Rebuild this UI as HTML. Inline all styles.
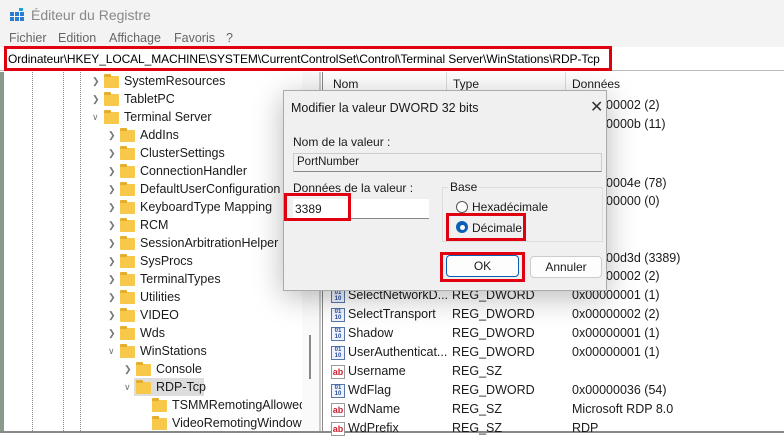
<!DOCTYPE html><html><head><meta charset="utf-8"><style>
*{margin:0;padding:0;box-sizing:border-box}
body{width:784px;height:433px;overflow:hidden;background:#fff;font-family:"Liberation Sans",sans-serif;font-size:12px;color:#1a1a1a;position:relative}
.a{position:absolute;white-space:nowrap}
.fold{position:absolute;width:15px;height:12px;background:#f7c84a;border-radius:1px}
.fold:before{content:"";position:absolute;left:0;top:-2px;width:7px;height:3px;background:#e6ad2a;border-radius:1px 1px 0 0}
.chev{position:absolute;font-size:9px;color:#777}
.ic{position:absolute;width:14px;height:14px;border:1px solid #5577aa;font-size:6px;line-height:6px;color:#2a4d9a;font-weight:bold;text-align:center;background:#eef3ff}
.ab{position:absolute;width:14px;height:14px;border:1px solid #999;font-size:9px;line-height:12px;color:#c23;font-weight:bold;text-align:center;background:#fff}
.rb{position:absolute;border:3px solid #e0000f}
#tree{position:absolute;left:0;top:72px;width:302px;height:359px;overflow:hidden}
</style></head><body>
<div class="a" style="left:0;top:0;width:784px;height:30px;background:#f3f3f3"></div>
<svg class="a" style="left:10px;top:8px" width="14" height="14"><g fill="#2b7cd3"><rect x="0" y="4" width="4" height="4"/><rect x="5" y="4" width="4" height="4"/><rect x="0" y="9" width="4" height="4"/><rect x="5" y="9" width="4" height="4"/><rect x="10" y="9" width="4" height="4"/><rect x="10" y="4" width="4" height="4"/><rect x="9" y="0" width="4" height="3" fill="#1ea0d8"/></g></svg>
<div class="a" style="left:31px;top:7px;font-size:14px;color:#888">Éditeur du Registre</div>
<div class="a" style="left:0;top:30px;width:784px;height:17px;background:#f3f3f3"></div>
<div class="a" style="left:9px;top:31px;color:#666;font-size:12.5px">Fichier</div>
<div class="a" style="left:58px;top:31px;color:#666;font-size:12.5px">Edition</div>
<div class="a" style="left:109px;top:31px;color:#666;font-size:12.5px">Affichage</div>
<div class="a" style="left:174px;top:31px;color:#666;font-size:12.5px">Favoris</div>
<div class="a" style="left:226px;top:31px;color:#666;font-size:12.5px">?</div>
<div class="a" style="left:0;top:47px;width:784px;height:24px;background:#fff;border-bottom:1px solid #bbb"></div>
<div class="rb" style="left:4px;top:46px;width:608px;height:25px"></div>
<div class="a" style="left:8px;top:52px;font-size:12px;letter-spacing:-0.1px;color:#000">Ordinateur\HKEY_LOCAL_MACHINE\SYSTEM\CurrentControlSet\Control\Terminal Server\WinStations\RDP-Tcp</div>
<div class="a" style="left:0;top:72px;width:4px;height:361px;background:#8a9a8a"></div>
<div class="a" style="left:32px;top:72px;height:361px;border-left:1px dotted #888"></div>
<div class="a" style="left:63px;top:72px;height:361px;border-left:1px dotted #888"></div>
<div class="a" style="left:80px;top:72px;height:361px;border-left:1px dotted #888"></div>
<div id="tree"></div>
<div class="a" style="left:302px;top:72px;width:17px;height:359px;background:#fafafa"></div>
<div class="a" style="left:309px;top:335px;width:2px;height:44px;background:#888"></div>
<div class="a" style="left:319px;top:72px;width:2px;height:361px;background:#ccc"></div>
<div class="a" style="left:322px;top:72px;width:1px;height:361px;background:#888"></div>
<div class="a" style="left:0;top:431px;width:784px;height:2px;background:#888"></div>
<div class="a" style="left:333px;top:77px;font-size:12px">Nom</div>
<div class="a" style="left:446px;top:72px;height:20px;border-left:1px solid #ddd"></div>
<div class="a" style="left:565px;top:72px;height:20px;border-left:1px solid #ddd"></div>
<div class="a" style="left:453px;top:77px">Type</div>
<div class="a" style="left:572px;top:77px">Données</div>
<div id="rows"></div>
<div class="a" style="left:283px;top:90px;width:324px;height:201px;background:#f0f0f0;border:1px solid #aaa;box-shadow:0 6px 28px rgba(0,0,0,.28)"></div>
<div class="a" style="left:291px;top:101px;font-size:12.5px">Modifier la valeur DWORD 32 bits</div>
<div class="a" style="left:590px;top:97px;font-size:16px;color:#333">✕</div>
<div class="a" style="left:293px;top:135px">Nom de la valeur :</div>
<div class="a" style="left:293px;top:153px;width:309px;height:19px;background:#f0f0f0;border:1px solid #ccc;border-bottom-color:#888;padding:2px 3px;font-size:11.5px">PortNumber</div>
<div class="a" style="left:293px;top:181px">Données de la valeur :</div>
<div class="a" style="left:293px;top:199px;width:136px;height:20px;background:#fff;border-bottom:1px solid #888"></div>
<div class="a" style="left:295px;top:202px;font-size:12px">3389</div>
<div class="rb" style="left:284px;top:193px;width:67px;height:28px"></div>
<div class="a" style="left:442px;top:187px;width:161px;height:55px;border:1px solid #ddd"></div>
<div class="a" style="left:448px;top:180px;background:#f0f0f0;padding:0 2px">Base</div>
<div class="a" style="left:456px;top:201px;width:12px;height:12px;border:1px solid #555;border-radius:50%;background:#fff"></div>
<div class="a" style="left:472px;top:200px">Hexadécimale</div>
<div class="a" style="left:456px;top:221px;width:12px;height:12px;border-radius:50%;background:#0a5fb4"></div>
<div class="a" style="left:459.5px;top:224.5px;width:5px;height:5px;border-radius:50%;background:#fff"></div>
<div class="a" style="left:472px;top:221px">Décimale</div>
<div class="rb" style="left:446px;top:213px;width:80px;height:28px"></div>
<div class="a" style="left:446px;top:255px;width:73px;height:22px;background:#fdfdfd;border:1px solid #0a5fb4;border-radius:4px;text-align:center;line-height:20px">OK</div>
<div class="rb" style="left:440px;top:252px;width:85px;height:30px"></div>
<div class="a" style="left:530px;top:256px;width:72px;height:22px;background:#fdfdfd;border:1px solid #ccc;border-radius:4px;text-align:center;line-height:20px">Annuler</div>
<script>
var t=[[1,"SystemResources",">"],[1,"TabletPC",">"],[1,"Terminal Server","v"],[2,"AddIns",">"],[2,"ClusterSettings",">"],[2,"ConnectionHandler",">"],[2,"DefaultUserConfiguration",">"],[2,"KeyboardType Mapping",">"],[2,"RCM",">"],[2,"SessionArbitrationHelper",">"],[2,"SysProcs",">"],[2,"TerminalTypes",">"],[2,"Utilities",">"],[2,"VIDEO",">"],[2,"Wds",">"],[2,"WinStations","v"],[3,"Console",">"],[3,"RDP-Tcp","v"],[4,"TSMMRemotingAllowed",""],[4,"VideoRemotingWindowNames",""]];
var h='<div class="a" style="left:134px;top:306px;width:70px;height:18px;background:#ddd"></div>';t.forEach(function(r,i){var y=1+i*18,x=[0,104,120,136,152][r[0]];
if(r[2])h+='<div class="chev" style="left:'+(x-12)+'px;top:'+(y+3)+'px">'+(r[2]==">"?"&#x276F;":"&#x2228;")+'</div>';
h+='<div class="fold" style="left:'+x+'px;top:'+(y+3)+'px"></div><div class="a" style="left:'+(x+20)+'px;top:'+(y+1)+'px;font-size:12.5px">'+r[1]+'</div>';});
document.getElementById("tree").innerHTML=h;
var R=[[98,"","","0x00000002 (2)",1],[117,"","","0x0000000b (11)",1],[176,"","","0x0000004e (78)",1],[194,"","","0x00000000 (0)",1],[251,"","","0x00000d3d (3389)",1],[269,"","","0x00000002 (2)",1],[288,"SelectNetworkD...","REG_DWORD","0x00000001 (1)",1],[307,"SelectTransport","REG_DWORD","0x00000002 (2)",1],[326,"Shadow","REG_DWORD","0x00000001 (1)",1],[345,"UserAuthenticat...","REG_DWORD","0x00000001 (1)",1],[364,"Username","REG_SZ","",0],[383,"WdFlag","REG_DWORD","0x00000036 (54)",1],[402,"WdName","REG_SZ","Microsoft RDP 8.0",0],[421,"WdPrefix","REG_SZ","RDP",0]];
h="";R.forEach(function(r){var y=r[0];h+=(r[4]?'<div class="ic" style="left:331px;top:'+(y+1)+'px">01<br>10</div>':'<div class="ab" style="left:331px;top:'+(y+1)+'px">ab</div>')+'<div class="a" style="left:348px;top:'+y+'px;font-size:12.5px">'+r[1]+'</div><div class="a" style="left:452px;top:'+y+'px;font-size:12.5px">'+r[2]+'</div><div class="a" style="left:572px;top:'+y+'px;font-size:12.5px">'+r[3]+'</div>';});
document.getElementById("rows").innerHTML=h;
</script>
</body></html>
